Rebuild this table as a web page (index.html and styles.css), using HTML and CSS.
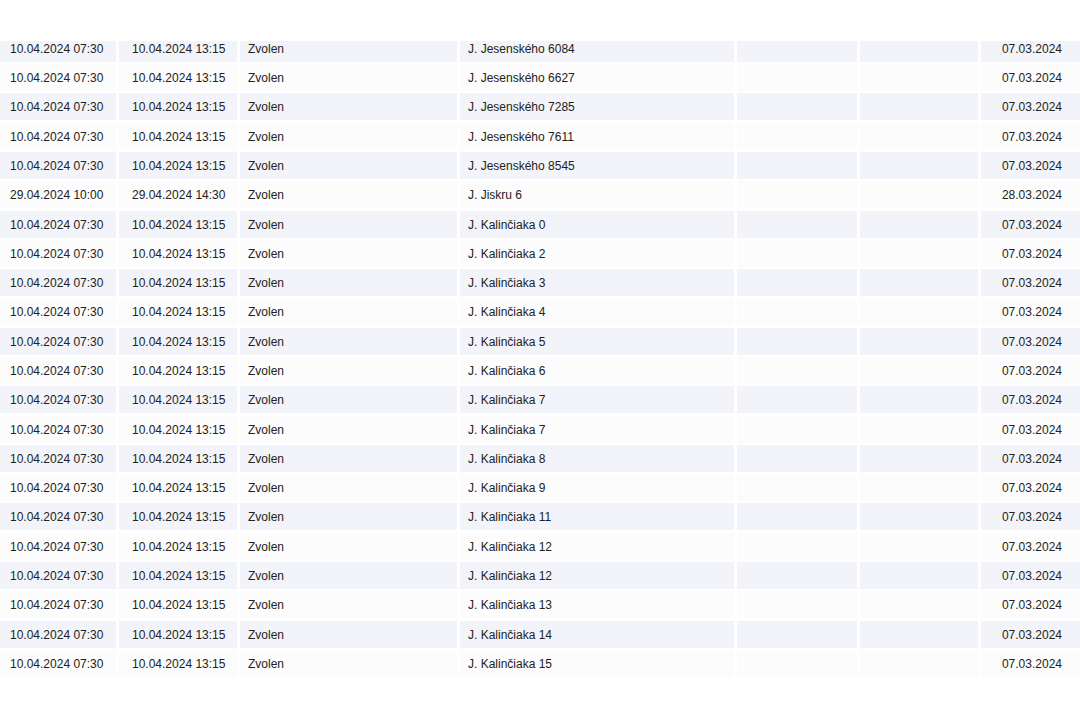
FILE: index.html
```html
<!DOCTYPE html>
<html lang="sk">
<head>
    <meta charset="UTF-8">
    <meta name="viewport" content="width=device-width, initial-scale=1.0">
    <title>Odstávky</title>
    <link rel="stylesheet" href="styles.css">
</head>
<body>
    <div class="list-wrap">
        <div class="list">
            <div class="row"><div class="cell t1">10.04.2024 07:30</div><div class="cell t2">10.04.2024 13:15</div><div class="cell">Zvolen</div><div class="cell">J. Jesenského 6084</div><div class="cell"></div><div class="cell"></div><div class="cell right">07.03.2024</div></div>
            <div class="row"><div class="cell t1">10.04.2024 07:30</div><div class="cell t2">10.04.2024 13:15</div><div class="cell">Zvolen</div><div class="cell">J. Jesenského 6627</div><div class="cell"></div><div class="cell"></div><div class="cell right">07.03.2024</div></div>
            <div class="row"><div class="cell t1">10.04.2024 07:30</div><div class="cell t2">10.04.2024 13:15</div><div class="cell">Zvolen</div><div class="cell">J. Jesenského 7285</div><div class="cell"></div><div class="cell"></div><div class="cell right">07.03.2024</div></div>
            <div class="row"><div class="cell t1">10.04.2024 07:30</div><div class="cell t2">10.04.2024 13:15</div><div class="cell">Zvolen</div><div class="cell">J. Jesenského 7611</div><div class="cell"></div><div class="cell"></div><div class="cell right">07.03.2024</div></div>
            <div class="row"><div class="cell t1">10.04.2024 07:30</div><div class="cell t2">10.04.2024 13:15</div><div class="cell">Zvolen</div><div class="cell">J. Jesenského 8545</div><div class="cell"></div><div class="cell"></div><div class="cell right">07.03.2024</div></div>
            <div class="row"><div class="cell t1">29.04.2024 10:00</div><div class="cell t2">29.04.2024 14:30</div><div class="cell">Zvolen</div><div class="cell">J. Jiskru 6</div><div class="cell"></div><div class="cell"></div><div class="cell right">28.03.2024</div></div>
            <div class="row"><div class="cell t1">10.04.2024 07:30</div><div class="cell t2">10.04.2024 13:15</div><div class="cell">Zvolen</div><div class="cell">J. Kalinčiaka 0</div><div class="cell"></div><div class="cell"></div><div class="cell right">07.03.2024</div></div>
            <div class="row"><div class="cell t1">10.04.2024 07:30</div><div class="cell t2">10.04.2024 13:15</div><div class="cell">Zvolen</div><div class="cell">J. Kalinčiaka 2</div><div class="cell"></div><div class="cell"></div><div class="cell right">07.03.2024</div></div>
            <div class="row"><div class="cell t1">10.04.2024 07:30</div><div class="cell t2">10.04.2024 13:15</div><div class="cell">Zvolen</div><div class="cell">J. Kalinčiaka 3</div><div class="cell"></div><div class="cell"></div><div class="cell right">07.03.2024</div></div>
            <div class="row"><div class="cell t1">10.04.2024 07:30</div><div class="cell t2">10.04.2024 13:15</div><div class="cell">Zvolen</div><div class="cell">J. Kalinčiaka 4</div><div class="cell"></div><div class="cell"></div><div class="cell right">07.03.2024</div></div>
            <div class="row"><div class="cell t1">10.04.2024 07:30</div><div class="cell t2">10.04.2024 13:15</div><div class="cell">Zvolen</div><div class="cell">J. Kalinčiaka 5</div><div class="cell"></div><div class="cell"></div><div class="cell right">07.03.2024</div></div>
            <div class="row"><div class="cell t1">10.04.2024 07:30</div><div class="cell t2">10.04.2024 13:15</div><div class="cell">Zvolen</div><div class="cell">J. Kalinčiaka 6</div><div class="cell"></div><div class="cell"></div><div class="cell right">07.03.2024</div></div>
            <div class="row"><div class="cell t1">10.04.2024 07:30</div><div class="cell t2">10.04.2024 13:15</div><div class="cell">Zvolen</div><div class="cell">J. Kalinčiaka 7</div><div class="cell"></div><div class="cell"></div><div class="cell right">07.03.2024</div></div>
            <div class="row"><div class="cell t1">10.04.2024 07:30</div><div class="cell t2">10.04.2024 13:15</div><div class="cell">Zvolen</div><div class="cell">J. Kalinčiaka 7</div><div class="cell"></div><div class="cell"></div><div class="cell right">07.03.2024</div></div>
            <div class="row"><div class="cell t1">10.04.2024 07:30</div><div class="cell t2">10.04.2024 13:15</div><div class="cell">Zvolen</div><div class="cell">J. Kalinčiaka 8</div><div class="cell"></div><div class="cell"></div><div class="cell right">07.03.2024</div></div>
            <div class="row"><div class="cell t1">10.04.2024 07:30</div><div class="cell t2">10.04.2024 13:15</div><div class="cell">Zvolen</div><div class="cell">J. Kalinčiaka 9</div><div class="cell"></div><div class="cell"></div><div class="cell right">07.03.2024</div></div>
            <div class="row"><div class="cell t1">10.04.2024 07:30</div><div class="cell t2">10.04.2024 13:15</div><div class="cell">Zvolen</div><div class="cell">J. Kalinčiaka 11</div><div class="cell"></div><div class="cell"></div><div class="cell right">07.03.2024</div></div>
            <div class="row"><div class="cell t1">10.04.2024 07:30</div><div class="cell t2">10.04.2024 13:15</div><div class="cell">Zvolen</div><div class="cell">J. Kalinčiaka 12</div><div class="cell"></div><div class="cell"></div><div class="cell right">07.03.2024</div></div>
            <div class="row"><div class="cell t1">10.04.2024 07:30</div><div class="cell t2">10.04.2024 13:15</div><div class="cell">Zvolen</div><div class="cell">J. Kalinčiaka 12</div><div class="cell"></div><div class="cell"></div><div class="cell right">07.03.2024</div></div>
            <div class="row"><div class="cell t1">10.04.2024 07:30</div><div class="cell t2">10.04.2024 13:15</div><div class="cell">Zvolen</div><div class="cell">J. Kalinčiaka 13</div><div class="cell"></div><div class="cell"></div><div class="cell right">07.03.2024</div></div>
            <div class="row"><div class="cell t1">10.04.2024 07:30</div><div class="cell t2">10.04.2024 13:15</div><div class="cell">Zvolen</div><div class="cell">J. Kalinčiaka 14</div><div class="cell"></div><div class="cell"></div><div class="cell right">07.03.2024</div></div>
            <div class="row"><div class="cell t1">10.04.2024 07:30</div><div class="cell t2">10.04.2024 13:15</div><div class="cell">Zvolen</div><div class="cell">J. Kalinčiaka 15</div><div class="cell"></div><div class="cell"></div><div class="cell right">07.03.2024</div></div>
        </div>
    </div>
</body>
</html>
```

FILE: styles.css
```css
body {
    margin: 0;
    padding: 0;
    background: #fff;
    font-family: "Liberation Sans", Arial, sans-serif;
    font-size: 12px;
    color: #222;
    overflow: hidden;
}

/* visible part of the list, the rest is scrolled away */
.list-wrap {
    margin-top: 41px;
    height: 636px;
    overflow: hidden;
}

.list {
    display: flex;
    flex-direction: column;
    gap: 2.29px;
    margin-top: -6.1px;
}

.row {
    display: grid;
    grid-template-columns: 116px 118px 217px 274px 120px 118px 105px;
    column-gap: 3px;
    height: 27px;
    flex: none;
}

.cell {
    display: flex;
    align-items: center;
    padding: 1px 8px 0;
    white-space: nowrap;
    overflow: hidden;
}

.row:nth-child(odd) .cell {
    background: #f3f4f9;
}

.row:nth-child(even) .cell {
    background: #fcfcfc;
}

.cell.t1 { padding-left: 10px; }
.cell.t2 { padding-left: 13px; }

.cell.right {
    justify-content: flex-end;
    padding-right: 24px;
}
```
